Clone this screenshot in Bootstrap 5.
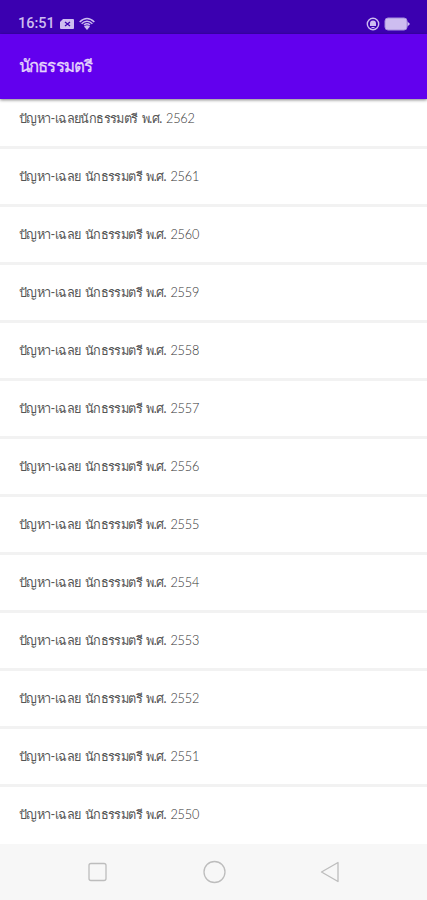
<!DOCTYPE html>
<html lang="th">
<head>
<meta charset="utf-8">
<meta name="viewport" content="width=device-width, initial-scale=1">
<title>นักธรรมตรี</title>
<link href="https://cdn.jsdelivr.net/npm/bootstrap@5.3.0/dist/css/bootstrap.min.css" rel="stylesheet">
<style>
body { height: 900px; overflow: hidden; font-family: Roboto, "Noto Sans", sans-serif; }
.status { height: 34px; background: #3b00b0; color: #cdbdf0; padding: 13px 17px 0 18px; font-size: 14.5px; font-weight: 500; line-height: 21px; }
.appbar { height: 65px; background: #6200ee; padding-left: 19px; color: #e4d4fc; z-index: 1; box-shadow: 0 1px 3px rgba(0,0,0,.5); }
.appbar h1 { font-size: 16.8px; letter-spacing: -.85px; -webkit-text-stroke: .3px #e4d4fc; }
.exam { height: 58.05px; border-bottom: 3px solid #f2f2f2; padding: 0 0 0 19px; font-family: Lato, sans-serif; font-size: 12.7px; letter-spacing: -.6px; word-spacing: 1.8px; color: #555; white-space: nowrap; }
.exam:first-child { height: 49.8px; padding-bottom: 8px; }
.exam:last-child { border: 0; height: 57px; padding-bottom: 3px; }
.year { letter-spacing: -.2px; font-weight: 300; color: #333; }
.softkeys { height: 56px; background: #f7f7f7; padding: 0 86px; }
</style>
<script src="https://cdn.jsdelivr.net/npm/bootstrap@5.3.0/dist/js/bootstrap.bundle.min.js"></script>
</head>
<body class="d-flex flex-column bg-white">
<div class="status d-flex flex-shrink-0 align-items-center justify-content-between">
  <div class="d-flex align-items-center gap-1"><span>16:51</span>
    <svg width="16" height="12" viewBox="0 0 16 12"><path d="M4 1h10q1 0 1 1v8q0 1-1 1H2q-1 0-1-1V4z" fill="#cdbdf0"/><path d="M6 4l5 4M11 4L6 8" stroke="#3b00b0" stroke-width="1.300"/></svg>
    <svg width="16" height="14" viewBox="0 0 16 14" fill="none" stroke="#cdbdf0"><path d="M.7 5q7.300-7 14.600 0M5 8q3-2.500 6 0" stroke-width="1.600"/><path d="M2.600 6.700q5.400-5 10.800 0" stroke-width="1.400"/><path d="M5 9.500q3-2.500 6 0L8 13z" fill="#cdbdf0" stroke="none"/></svg>
  </div>
  <div class="d-flex align-items-center gap-1">
    <svg width="14" height="14" viewBox="0 0 14 14"><circle cx="7" cy="7" r="5.700" fill="none" stroke="#cdbdf0" stroke-width="1.400"/><path d="M4 9V6.500a3 3 0 0 1 6 0V9zM5.500 10h3v1h-3z" fill="#cdbdf0"/></svg>
    <svg width="26" height="14" viewBox="0 0 26 14"><rect x="1" y="1" width="22" height="12" rx="3" fill="#cdbdf0" stroke="#a78fdd"/><path d="M23.500 4.500L26 7l-2.500 2.500z" fill="#cdbdf0"/></svg>
  </div>
</div>
<header class="appbar d-flex flex-shrink-0 align-items-center position-relative"><h1 class="m-0">นักธรรมตรี</h1></header>
<main class="flex-shrink-0">
  <div class="exam d-flex align-items-center"><span>ปัญหา-เฉลยนักธรรมตรี พ.ศ. <span class="year">2562</span></span></div>
  <div class="exam d-flex align-items-center"><span>ปัญหา-เฉลย นักธรรมตรี พ.ศ. <span class="year">2561</span></span></div>
  <div class="exam d-flex align-items-center"><span>ปัญหา-เฉลย นักธรรมตรี พ.ศ. <span class="year">2560</span></span></div>
  <div class="exam d-flex align-items-center"><span>ปัญหา-เฉลย นักธรรมตรี พ.ศ. <span class="year">2559</span></span></div>
  <div class="exam d-flex align-items-center"><span>ปัญหา-เฉลย นักธรรมตรี พ.ศ. <span class="year">2558</span></span></div>
  <div class="exam d-flex align-items-center"><span>ปัญหา-เฉลย นักธรรมตรี พ.ศ. <span class="year">2557</span></span></div>
  <div class="exam d-flex align-items-center"><span>ปัญหา-เฉลย นักธรรมตรี พ.ศ. <span class="year">2556</span></span></div>
  <div class="exam d-flex align-items-center"><span>ปัญหา-เฉลย นักธรรมตรี พ.ศ. <span class="year">2555</span></span></div>
  <div class="exam d-flex align-items-center"><span>ปัญหา-เฉลย นักธรรมตรี พ.ศ. <span class="year">2554</span></span></div>
  <div class="exam d-flex align-items-center"><span>ปัญหา-เฉลย นักธรรมตรี พ.ศ. <span class="year">2553</span></span></div>
  <div class="exam d-flex align-items-center"><span>ปัญหา-เฉลย นักธรรมตรี พ.ศ. <span class="year">2552</span></span></div>
  <div class="exam d-flex align-items-center"><span>ปัญหา-เฉลย นักธรรมตรี พ.ศ. <span class="year">2551</span></span></div>
  <div class="exam d-flex align-items-center"><span>ปัญหา-เฉลย นักธรรมตรี พ.ศ. <span class="year">2550</span></span></div>
</main>
<nav class="softkeys mt-auto flex-shrink-0 d-flex align-items-center justify-content-between">
  <svg width="24" height="24" viewBox="0 0 24 24" fill="none" stroke="#bdbdbd" stroke-width="1.300"><rect x="3" y="3.500" width="17" height="17" rx="2"/></svg>
  <svg width="24" height="24" viewBox="0 0 24 24" fill="none" stroke="#bdbdbd" stroke-width="1.300"><circle cx="12.500" cy="12" r="10.500"/></svg>
  <svg width="24" height="24" viewBox="0 0 24 24" fill="none" stroke="#bdbdbd" stroke-width="1.300" stroke-linejoin="round"><path d="M4.500 12L21 2.500v19z"/></svg>
</nav>
</body>
</html>
